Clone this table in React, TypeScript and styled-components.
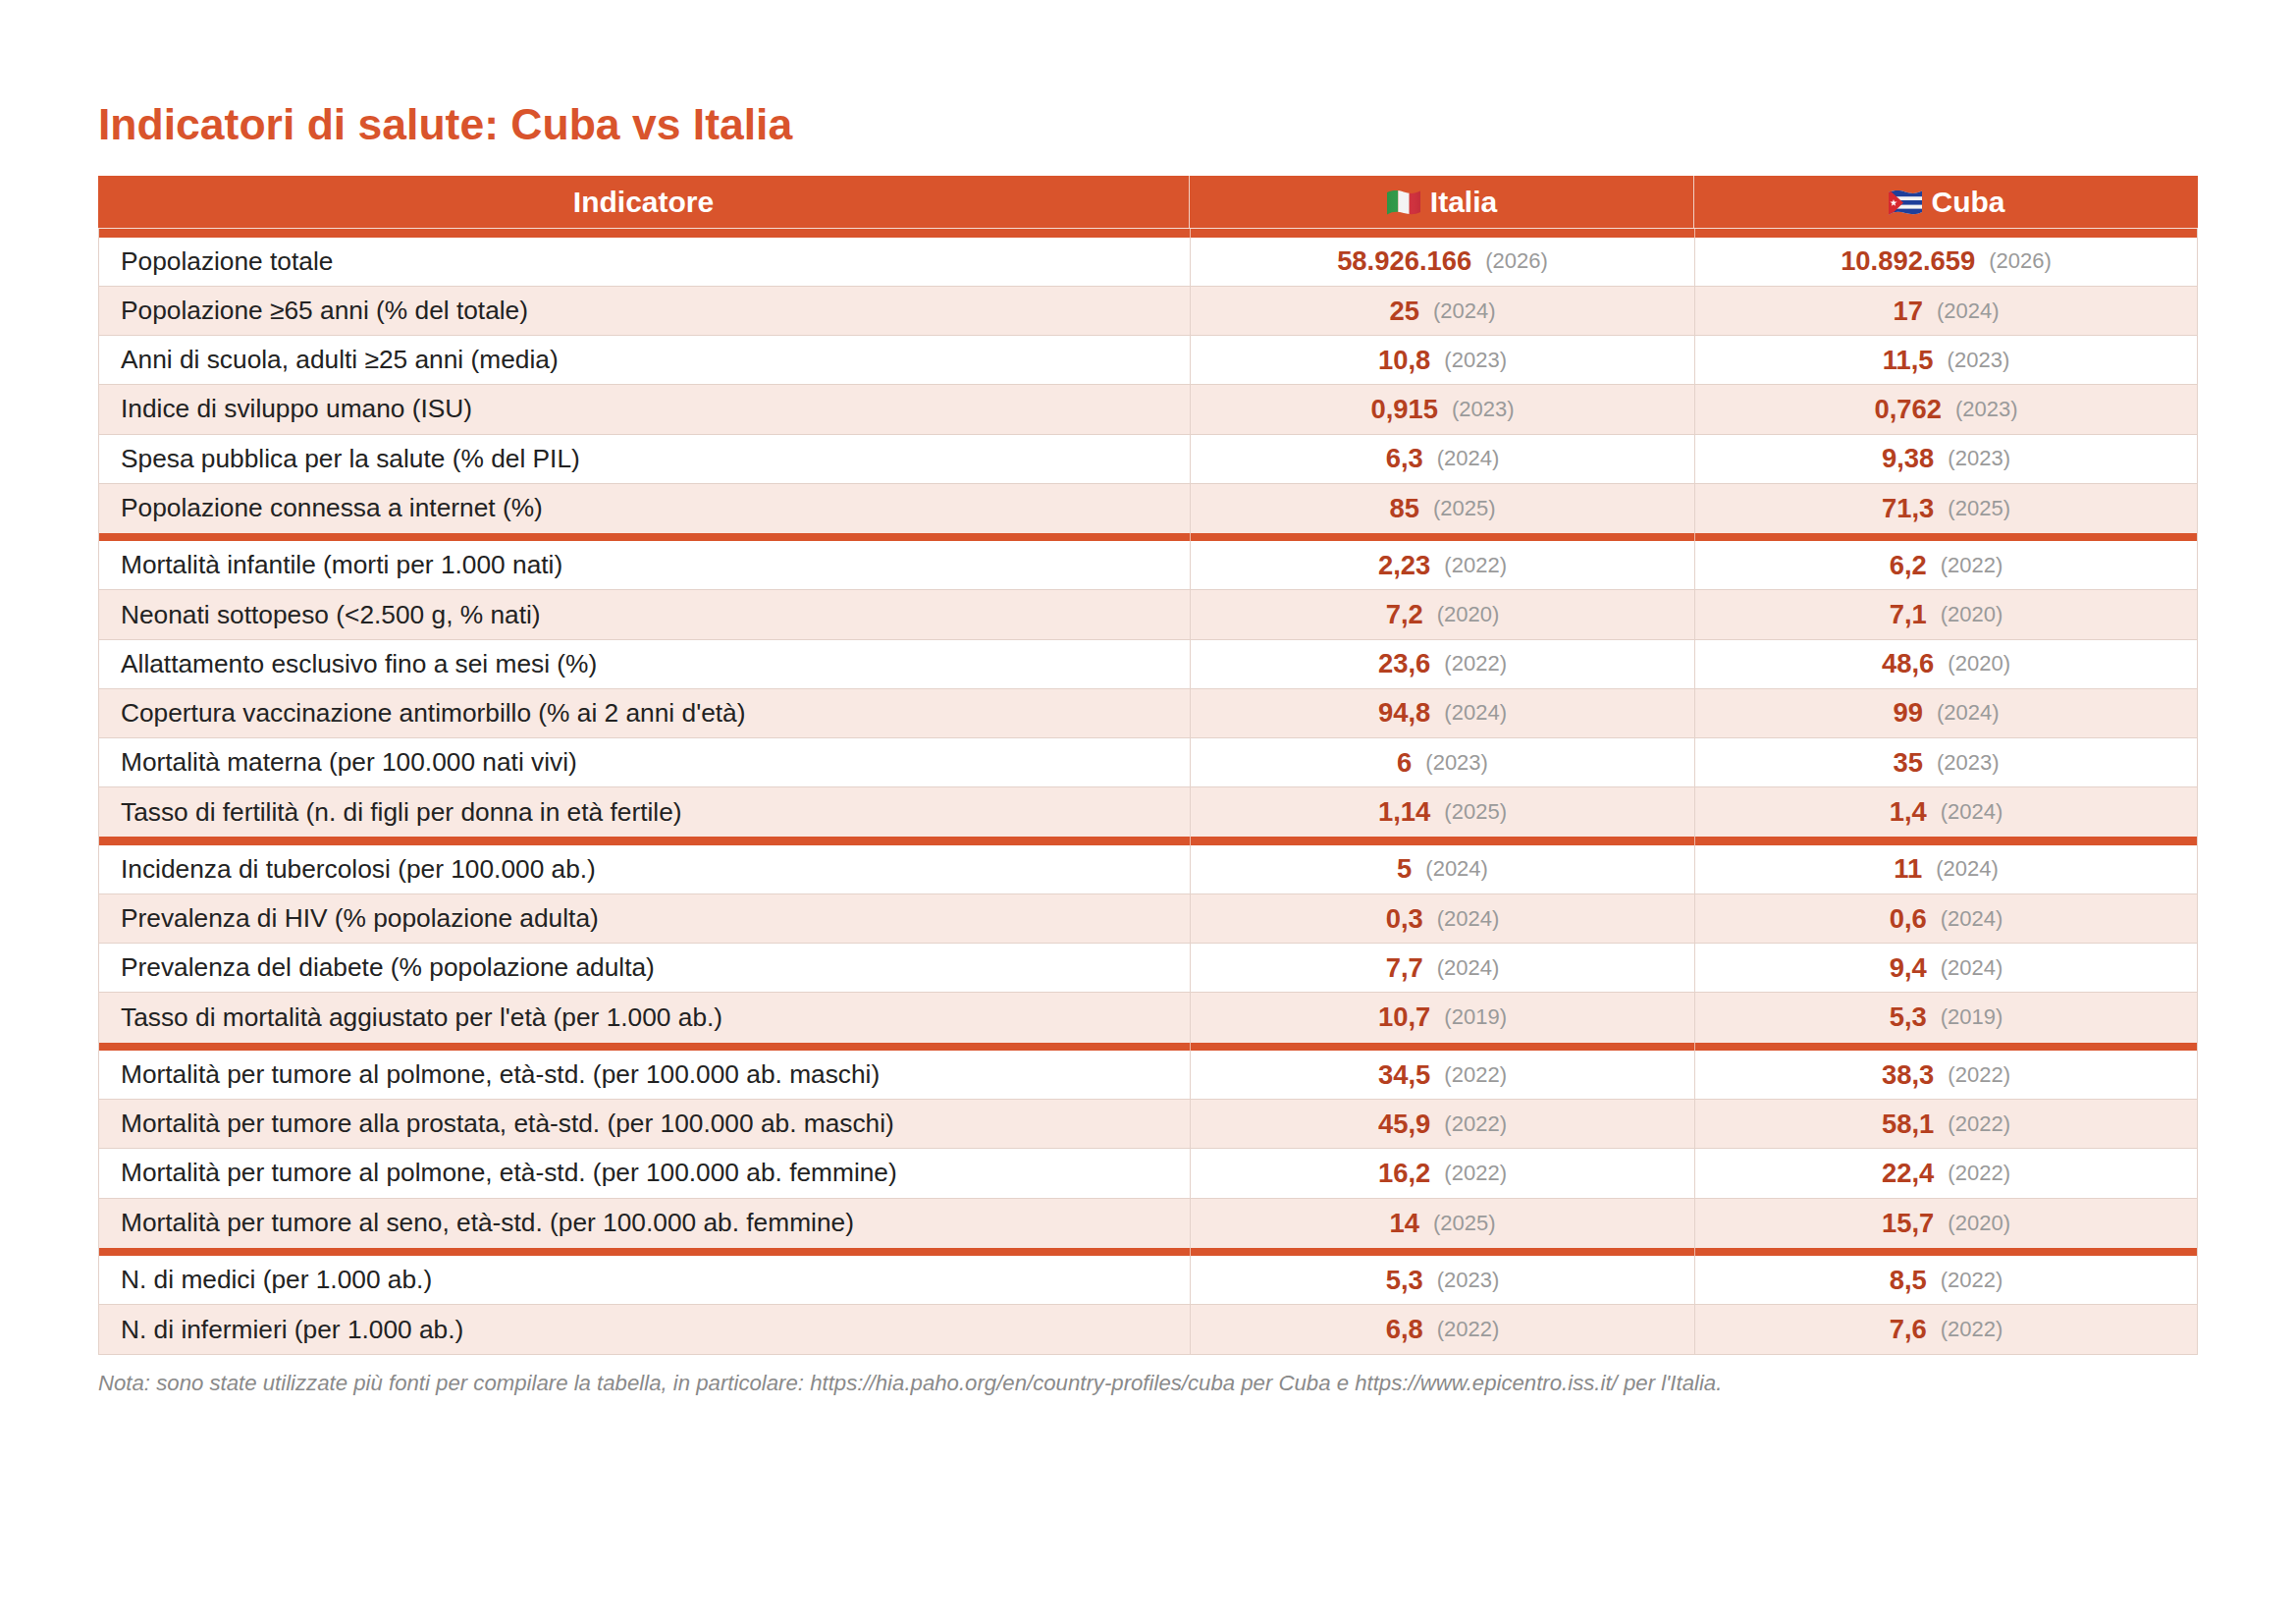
import styled, { createGlobalStyle } from 'styled-components';

// Dati: [indicatore, [valore Italia, anno], [valore Cuba, anno]]
type Value = [string, string];
type Row = [string, Value, Value];

const GROUPS: Row[][] = [
  [
    ['Popolazione totale', ['58.926.166', '2026'], ['10.892.659', '2026']],
    ['Popolazione ≥65 anni (% del totale)', ['25', '2024'], ['17', '2024']],
    ['Anni di scuola, adulti ≥25 anni (media)', ['10,8', '2023'], ['11,5', '2023']],
    ['Indice di sviluppo umano (ISU)', ['0,915', '2023'], ['0,762', '2023']],
    ['Spesa pubblica per la salute (% del PIL)', ['6,3', '2024'], ['9,38', '2023']],
    ['Popolazione connessa a internet (%)', ['85', '2025'], ['71,3', '2025']],
  ],
  [
    ['Mortalità infantile (morti per 1.000 nati)', ['2,23', '2022'], ['6,2', '2022']],
    ['Neonati sottopeso (<2.500 g, % nati)', ['7,2', '2020'], ['7,1', '2020']],
    ['Allattamento esclusivo fino a sei mesi (%)', ['23,6', '2022'], ['48,6', '2020']],
    ["Copertura vaccinazione antimorbillo (% ai 2 anni d'età)", ['94,8', '2024'], ['99', '2024']],
    ['Mortalità materna (per 100.000 nati vivi)', ['6', '2023'], ['35', '2023']],
    ['Tasso di fertilità (n. di figli per donna in età fertile)', ['1,14', '2025'], ['1,4', '2024']],
  ],
  [
    ['Incidenza di tubercolosi (per 100.000 ab.)', ['5', '2024'], ['11', '2024']],
    ['Prevalenza di HIV (% popolazione adulta)', ['0,3', '2024'], ['0,6', '2024']],
    ['Prevalenza del diabete (% popolazione adulta)', ['7,7', '2024'], ['9,4', '2024']],
    ["Tasso di mortalità aggiustato per l'età (per 1.000 ab.)", ['10,7', '2019'], ['5,3', '2019']],
  ],
  [
    ['Mortalità per tumore al polmone, età-std. (per 100.000 ab. maschi)', ['34,5', '2022'], ['38,3', '2022']],
    ['Mortalità per tumore alla prostata, età-std. (per 100.000 ab. maschi)', ['45,9', '2022'], ['58,1', '2022']],
    ['Mortalità per tumore al polmone, età-std. (per 100.000 ab. femmine)', ['16,2', '2022'], ['22,4', '2022']],
    ['Mortalità per tumore al seno, età-std. (per 100.000 ab. femmine)', ['14', '2025'], ['15,7', '2020']],
  ],
  [
    ['N. di medici (per 1.000 ab.)', ['5,3', '2023'], ['8,5', '2022']],
    ['N. di infermieri (per 1.000 ab.)', ['6,8', '2022'], ['7,6', '2022']],
  ],
];

const ORANGE = '#d9542c';
const VALUE_RED = '#b5401f';
const GRID = '#e4d2ca';

const GlobalStyle = createGlobalStyle`
  html, body {
    margin: 0;
    padding: 0;
    background: #fff;
  }
  body {
    font-family: "Liberation Sans", Arial, sans-serif;
    color: #222;
  }
`;

// ========== Layout ==========
const Page = styled.div`
  padding: 100px 100px 80px;
`;

const Title = styled.h1`
  margin: 0 0 26px 0;
  font-size: 44.5px;
  line-height: 1.2;
  font-weight: 700;
  color: ${ORANGE};
`;

const Table = styled.div`
  width: 2139px;
  border-left: 1px solid ${GRID};
  border-right: 1px solid ${GRID};
  border-bottom: 1px solid ${GRID};
  box-sizing: border-box;
`;

const Grid = styled.div`
  display: grid;
  grid-template-columns: 1111px 514px 1fr;
`;

// ========== Intestazione ==========
const HeadRow = styled(Grid)`
  height: 54px;
  box-sizing: border-box;
  background: ${ORANGE};
  border-bottom: 1px solid #f4ddd4;
  margin: 0 -1px;
`;

const HeadCell = styled.div`
  display: flex;
  align-items: center;
  justify-content: center;
  gap: 9px;
  font-size: 30px;
  font-weight: 700;
  color: #fff;
  & + & {
    border-left: 1px solid #f1cfc2;
  }
`;

// ========== Separatore di gruppo ==========
const SepRow = styled(Grid)`
  height: 8.4px;
  background: ${ORANGE};
`;

const SepCell = styled.div`
  & + & {
    border-left: 1px solid #eeb7a4;
  }
`;

// ========== Righe dati ==========
const DataRow = styled(Grid)<{ $alt: boolean }>`
  height: 50.2px;
  box-sizing: border-box;
  border-bottom: 1px solid ${GRID};
  background: ${({ $alt }) => ($alt ? '#f9e9e3' : '#fff')};
  &:last-child {
    border-bottom: none;
  }
`;

const LabelCell = styled.div`
  display: flex;
  align-items: center;
  padding-left: 22px;
  font-size: 26.3px;
  color: #222;
  white-space: nowrap;
`;

const ValueCell = styled.div`
  display: flex;
  align-items: center;
  justify-content: center;
  border-left: 1px solid ${GRID};
  white-space: nowrap;
`;

const Num = styled.span`
  font-size: 27.4px;
  font-weight: 700;
  color: ${VALUE_RED};
`;

const Year = styled.span`
  margin-left: 14px;
  font-size: 22px;
  color: #9a9a9a;
`;

const Note = styled.p`
  margin: 16px 0 0 0;
  font-size: 22.2px;
  line-height: 1.2;
  font-style: italic;
  color: #8a8a8a;
`;

const FlagSvg = styled.svg`
  width: 36px;
  height: 28px;
  flex-shrink: 0;
`;

const WAVE = 'M1 4 C7 1.5 12 1.5 18 3.5 S29 5.5 35 2.5 V24 C29 27 24 26.5 18 25 S7 23 1 26.5 Z';

function ItalyFlag() {
  return (
    <FlagSvg viewBox="0 0 36 28">
      <defs>
        <clipPath id="wave-it">
          <path d={WAVE} />
        </clipPath>
        <linearGradient id="shade-it" x1="0" x2="1">
          <stop offset="0" stopColor="#000" stopOpacity="0.3" />
          <stop offset="0.5" stopColor="#fff" stopOpacity="0" />
          <stop offset="1" stopColor="#000" stopOpacity="0.4" />
        </linearGradient>
      </defs>
      <g clipPath="url(#wave-it)">
        <rect x="0" y="0" width="12.3" height="28" fill="#2f9a48" />
        <rect x="12.3" y="0" width="11.4" height="28" fill="#f4f4f4" />
        <rect x="23.7" y="0" width="12.3" height="28" fill="#d22f3c" />
        <rect x="0" y="0" width="36" height="28" fill="url(#shade-it)" opacity="0.18" />
      </g>
    </FlagSvg>
  );
}

function CubaFlag() {
  return (
    <FlagSvg viewBox="0 0 36 28">
      <defs>
        <clipPath id="wave-cu">
          <path d={WAVE} />
        </clipPath>
      </defs>
      <g clipPath="url(#wave-cu)">
        <rect x="0" y="0" width="36" height="28" fill="#f4f4f4" />
        <rect x="0" y="0" width="36" height="8.2" fill="#1f3f99" />
        <rect x="0" y="12" width="36" height="4.6" fill="#1f3f99" />
        <rect x="0" y="20.6" width="36" height="8" fill="#1f3f99" />
        <path d="M0 0 L16 14.5 L0 30 Z" fill="#d7282f" />
        <path
          d="M6 11 L6.9 13.6 L9.6 13.6 L7.4 15.2 L8.2 17.8 L6 16.2 L3.8 17.8 L4.6 15.2 L2.4 13.6 L5.1 13.6 Z"
          fill="#fff"
        />
      </g>
    </FlagSvg>
  );
}

function App() {
  let n = 0;
  return (
    <Page>
      <GlobalStyle />
      <Title>Indicatori di salute: Cuba vs Italia</Title>
      <Table>
        <HeadRow>
          <HeadCell>Indicatore</HeadCell>
          <HeadCell>
            <ItalyFlag />
            <span>Italia</span>
          </HeadCell>
          <HeadCell>
            <CubaFlag />
            <span>Cuba</span>
          </HeadCell>
        </HeadRow>
        {GROUPS.map((group, gi) => (
          <div key={gi}>
            <SepRow>
              <SepCell />
              <SepCell />
              <SepCell />
            </SepRow>
            {group.map(([label, it, cu]) => {
              const alt = n++ % 2 === 1;
              return (
                <DataRow key={label} $alt={alt}>
                  <LabelCell>{label}</LabelCell>
                  <ValueCell>
                    <Num>{it[0]}</Num>
                    <Year>({it[1]})</Year>
                  </ValueCell>
                  <ValueCell>
                    <Num>{cu[0]}</Num>
                    <Year>({cu[1]})</Year>
                  </ValueCell>
                </DataRow>
              );
            })}
          </div>
        ))}
      </Table>
      <Note>
        Nota: sono state utilizzate più fonti per compilare la tabella, in particolare:
        https://hia.paho.org/en/country-profiles/cuba per Cuba e https://www.epicentro.iss.it/ per
        l'Italia.
      </Note>
    </Page>
  );
}

export default App;
